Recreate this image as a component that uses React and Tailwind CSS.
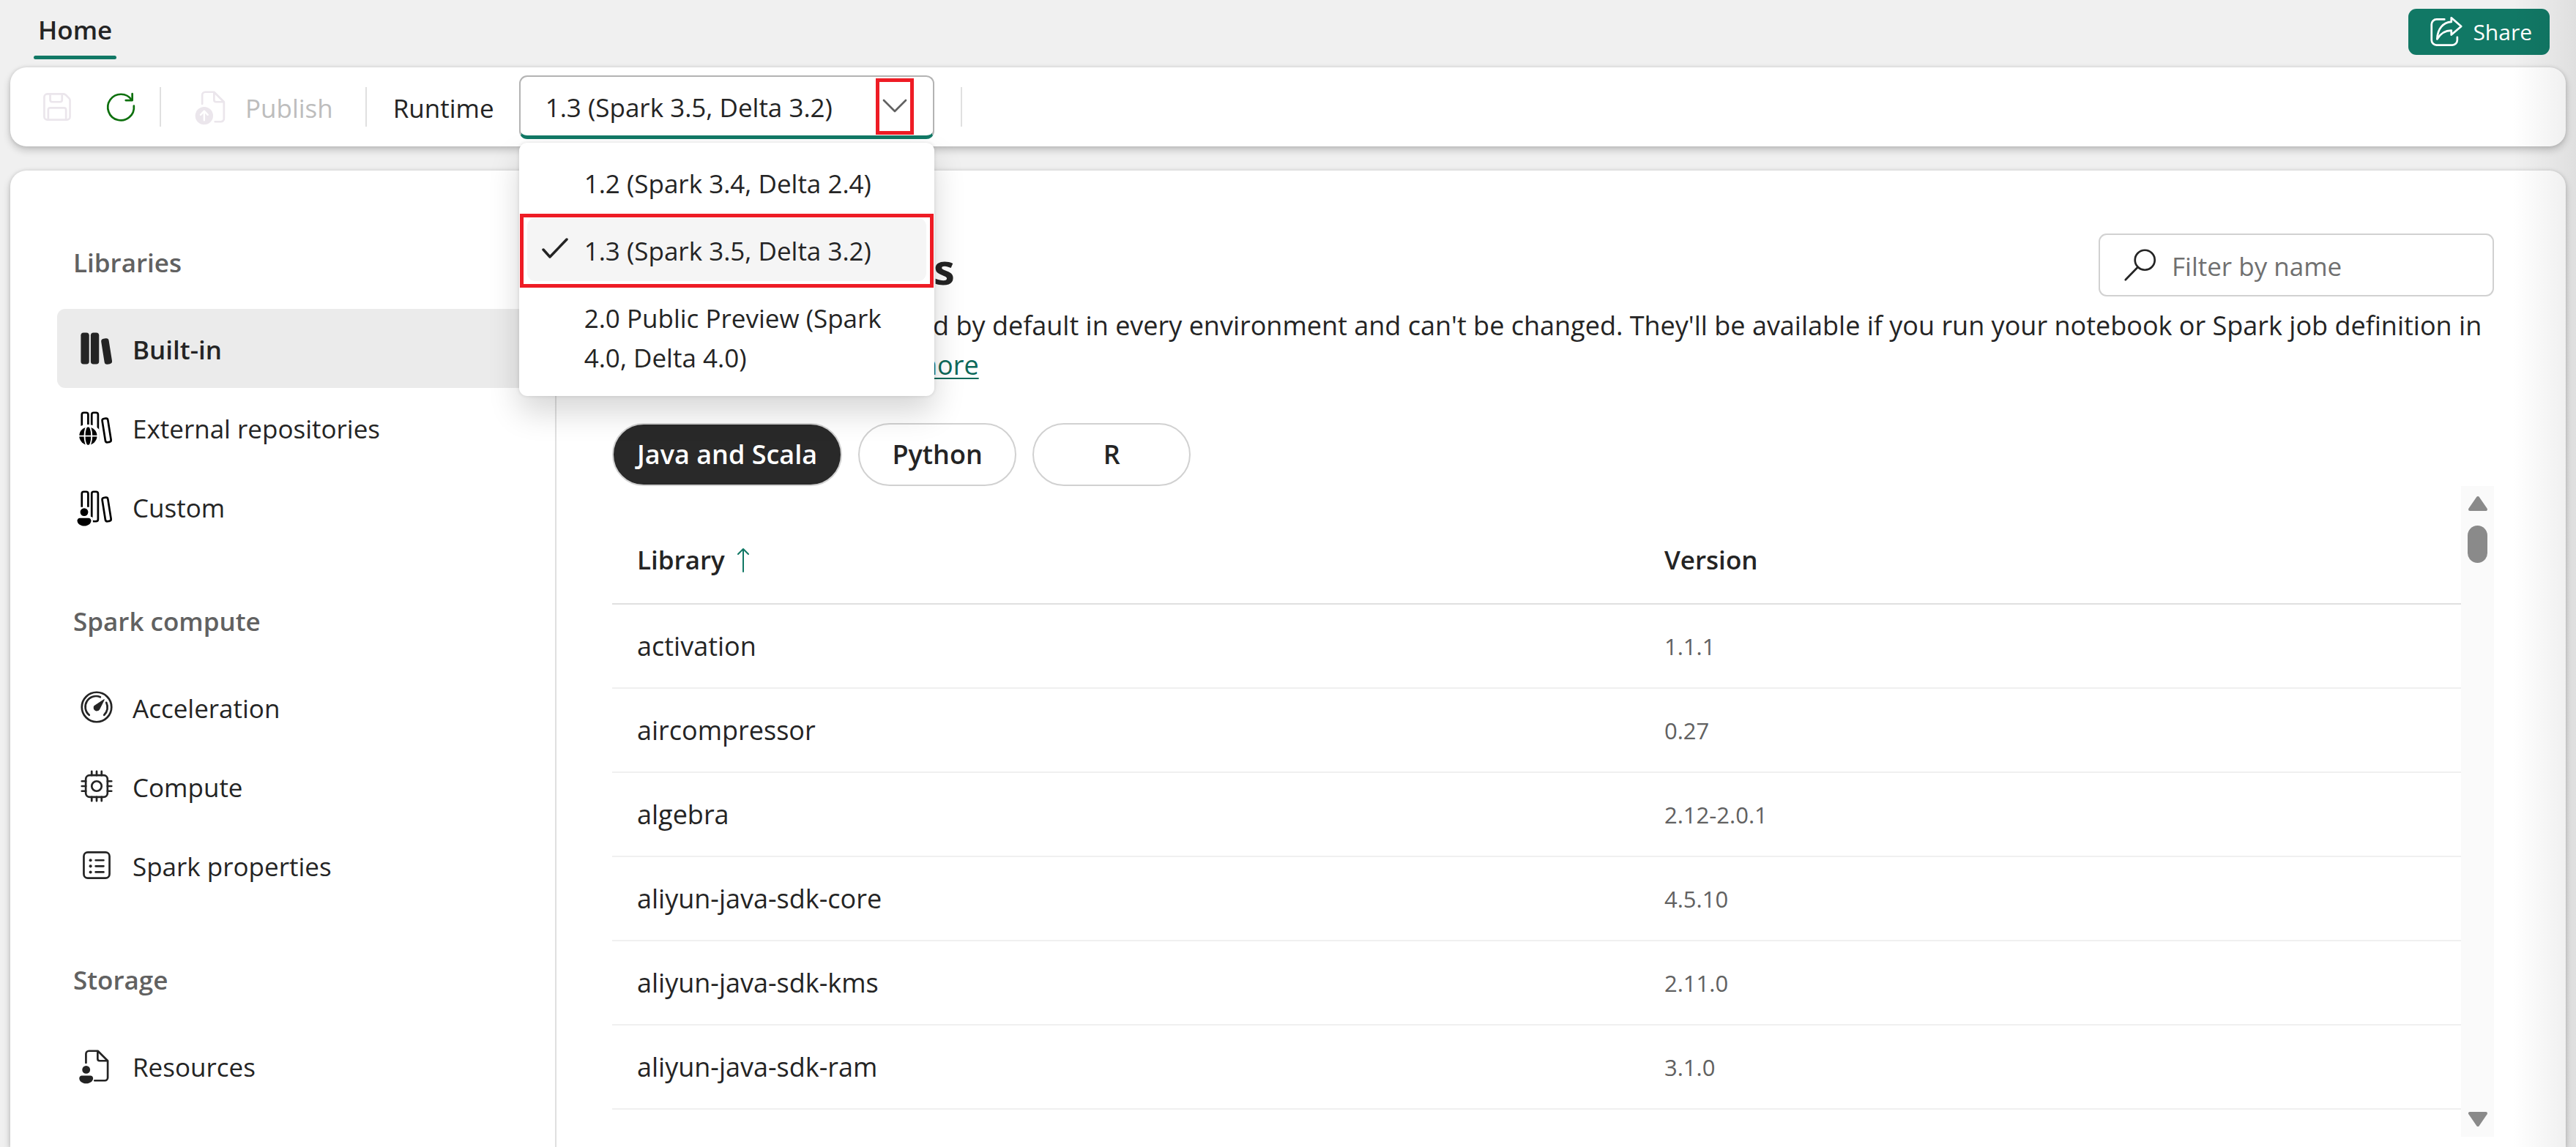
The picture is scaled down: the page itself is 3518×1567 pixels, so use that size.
import React, { useState } from 'react';

const runtimes = [
    "1.2 (Spark 3.4, Delta 2.4)",
    "1.3 (Spark 3.5, Delta 3.2)",
    "2.0 Public Preview (Spark 4.0, Delta 4.0)",
];

const languages = ["Java and Scala", "Python", "R"];

const libraries = [
    { name: "activation", version: "1.1.1" },
    { name: "aircompressor", version: "0.27" },
    { name: "algebra", version: "2.12-2.0.1" },
    { name: "aliyun-java-sdk-core", version: "4.5.10" },
    { name: "aliyun-java-sdk-kms", version: "2.11.0" },
    { name: "aliyun-java-sdk-ram", version: "3.1.0" },
];

// Shared wrapper, every icon is drawn on a 20x20 grid
function Icon({ children, className = "" }) {
    return (
        <svg
            viewBox="0 0 20 20"
            fill="none"
            stroke="currentColor"
            strokeLinecap="round"
            strokeLinejoin="round"
            aria-hidden="true"
            className={`size-[54px] shrink-0 ${className}`}
        >
            {children}
        </svg>
    );
}

const SaveIcon = () => (
    <Icon>
        <path d="M5 3.5h8.2c.4 0 .8.2 1.1.4l1.8 1.8c.3.3.4.7.4 1.1V15a1.5 1.5 0 0 1-1.5 1.5H5A1.5 1.5 0 0 1 3.5 15V5A1.5 1.5 0 0 1 5 3.5Z" />
        <path d="M6.5 3.5v3a1 1 0 0 0 1 1h4a1 1 0 0 0 1-1v-3M5.5 16.5v-5a1 1 0 0 1 1-1h7a1 1 0 0 1 1 1v5" />
    </Icon>
);

const RefreshIcon = () => (
    <Icon className="text-[#0e700e]">
        <path d="M16.6 9.5A6.6 6.6 0 1 1 15.5 6.5" />
        <path d="M15.8 3.4V6.7H12.5" />
    </Icon>
);

const PublishIcon = () => (
    <Icon>
        <path d="M4.5 8.5V4A1.5 1.5 0 0 1 6 2.5h4.5l5 5V16a1.5 1.5 0 0 1-1.5 1.5h-3M10.5 2.5v4a1 1 0 0 0 1 1h4" />
        <circle cx="5.5" cy="14.5" r="4.5" fill="currentColor" stroke="none" />
        <path d="M5.5 16.8v-4.600M3.7 14l1.8-1.9L7.3 14" stroke="#fff" strokeWidth=".9" />
    </Icon>
);

const ShareIcon = () => (
    <Icon>
        <path d="M9 3.5H5A2.5 2.5 0 0 0 2.5 6v8A2.5 2.5 0 0 0 5 16.5h8A2.5 2.5 0 0 0 15.5 14v-1.5" />
        <path d="M12.5 2.7 17.5 7l-5 4.3V9.1c-3.2 0-5.4 1.300-7.2 4.400.2-5.200 3-8.500 7.200-8.700Z" />
    </Icon>
);

const SearchIcon = () => (
    <Icon>
        <circle cx="12.3" cy="7.5" r="5" />
        <path d="m8.7 11.1-6.2 6.400" />
    </Icon>
);

const BuiltInIcon = () => (
    <Icon>
        <g fill="currentColor" stroke="none">
            <rect x="2" y="2" width="4.2" height="16" rx="1.4" />
            <rect x="7" y="2" width="4.2" height="16" rx="1.4" />
            <rect x="13.1" y="4.9" width="3.9" height="13.1" rx="1.4" transform="rotate(-9 15.1 11.5)" />
        </g>
    </Icon>
);

const Books = () => (
    <>
        <rect x="2.5" y="2.5" width="3.2" height="15" rx="1" />
        <rect x="7.5" y="2.5" width="3.2" height="15" rx="1" />
        <rect x="13.6" y="5.4" width="2.9" height="12.1" rx="1" transform="rotate(-9 15.1 11.5)" />
    </>
);

const ExternalIcon = () => (
    <Icon className="text-black">
        <Books />
        <path d="M0 20V10.500c1.500-1.500 3.500-2 5.700-2s4 .8 5.600 2.500V20Z" fill="#fff" stroke="none" />
        <circle cx="5.7" cy="14.3" r="4.5" fill="currentColor" stroke="none" />
        <g stroke="#fff" strokeWidth=".7">
            <path d="M1 14.3h9.400" />
            <ellipse cx="5.7" cy="14.3" rx="1.8" ry="5.200" />
        </g>
    </Icon>
);

const CustomIcon = () => (
    <Icon className="overflow-visible text-black">
        <Books />
        <path d="M0 20v-5l1-4.700h5.400l.4 4.700 1.300.6V20Z" fill="#fff" stroke="none" />
        <g fill="currentColor" stroke="none">
            <circle cx="3.7" cy="12.8" r="2" />
            <path d="M1.5 15.8h4.400c.7 0 1.300.6 1.300 1.300 0 1.600-1.600 2.700-3.500 2.700S.2 18.700.2 17.100c0-.7.6-1.300 1.300-1.300Z" />
        </g>
    </Icon>
);

const AccelerationIcon = () => (
    <Icon>
        <circle cx="10" cy="10" r="7.5" />
        <path d="M6.2 14A5.4 5.4 0 0 1 11.8 4.9M14.9 7.7A5.4 5.4 0 0 1 13.8 14" />
        <path d="M13.8 6.2 11.3 11.2A1.5 1.5 0 1 1 8.9 9.4Z" fill="currentColor" strokeWidth=".4" />
    </Icon>
);

const ComputeIcon = () => (
    <Icon>
        <rect x="4.5" y="4.5" width="11" height="11" rx="2" />
        <circle cx="10" cy="10" r="2.5" />
        <path d="M7.5 4.5v-2M10 4.5v-2M12.5 4.5v-2M7.5 17.5v-2M10 17.5v-2M12.5 17.5v-2M4.5 7.5h-2M4.5 10h-2M4.5 12.5h-2M17.5 7.5h-2M17.5 10h-2M17.5 12.5h-2" />
    </Icon>
);

const PropertiesIcon = () => (
    <Icon>
        <rect x="3.5" y="3.5" width="13" height="13" rx="2" />
        <path d="M9.5 7.5h4M9.5 10.5h4M9.5 13.5h4" />
        <g fill="currentColor" stroke="none">
            <circle cx="6.9" cy="7.5" r=".75" />
            <circle cx="6.9" cy="10.5" r=".75" />
            <circle cx="6.9" cy="13.5" r=".75" />
        </g>
    </Icon>
);

const ResourcesIcon = () => (
    <Icon>
        <path d="M4.6 8.5V4A1.5 1.5 0 0 1 6.1 2.5h4.5l5 5V16a1.5 1.5 0 0 1-1.5 1.5H9M10.5 2.5v4a1 1 0 0 0 1 1h4" />
        <g fill="currentColor" stroke="none">
            <circle cx="4.7" cy="12" r="2" />
            <path d="M2.5 15h4.400c.7 0 1.300.6 1.300 1.300 0 1.600-1.600 2.700-3.500 2.700s-3.500-1.100-3.500-2.700c0-.7.6-1.300 1.300-1.300Z" />
        </g>
    </Icon>
);

const sections = [
    {
        title: "Libraries",
        items: [
            { label: "Built-in", icon: BuiltInIcon, active: true },
            { label: "External repositories", icon: ExternalIcon },
            { label: "Custom", icon: CustomIcon },
        ],
    },
    {
        title: "Spark compute",
        items: [
            { label: "Acceleration", icon: AccelerationIcon },
            { label: "Compute", icon: ComputeIcon },
            { label: "Spark properties", icon: PropertiesIcon },
        ],
    },
    {
        title: "Storage",
        items: [{ label: "Resources", icon: ResourcesIcon }],
    },
];

function Divider() {
    return <div className="h-[54px] w-[2px] shrink-0 bg-[#e0e0e0]"></div>;
}

function RuntimePicker({ value, onChange }) {
    return (
        <div className="relative ml-[34px] w-[567px]">
            <select
                id="runtime"
                value={value}
                onChange={(e) => onChange(e.target.value)}
                className="block h-[87px] w-full appearance-none rounded-[11px] border-2 border-b-[5px] border-[#b3b3b3] border-b-[#117865] bg-white pt-[4px] pl-[34px] outline-none"
            >
                {runtimes.map((r) => <option key={r}>{r}</option>)}
            </select>
            <div className="pointer-events-none absolute top-[4px] right-[28px] flex h-[77px] w-[52px] items-center justify-center border-[5px] border-[#ee1c25] text-[#616161]">
                <svg viewBox="0 0 34 20" fill="none" stroke="currentColor" strokeWidth="2.7" strokeLinecap="round" strokeLinejoin="round" className="h-[20px] w-[34px]">
                    <path d="m2 2 15 15L32 2" />
                </svg>
            </div>

            {/* Options list, open under the field */}
            <ul role="listbox" aria-label="Runtime versions" className="absolute top-full left-0 z-20 mt-[5px] flex w-full flex-col gap-[6px] rounded-[11px] bg-white p-[11px] shadow-[0_0_5px_rgba(0,0,0,0.12),0_22px_43px_rgba(0,0,0,0.16)]">
                {runtimes.map((r) => (
                    <li key={r} role="option" aria-selected={r === value} className="relative">
                        <button
                            type="button"
                            onClick={() => onChange(r)}
                            className={`flex w-full items-start rounded-[11px] pt-[18px] pr-[20px] pb-[14px] pl-[16px] text-left ${r === value ? "bg-[#f5f5f5]" : ""}`}
                        >
                            <span className="flex h-[50px] w-[62px] shrink-0 items-center">
                                {r === value && (
                                    <svg viewBox="0 0 44 44" fill="none" stroke="currentColor" strokeWidth="3.5" strokeLinecap="round" strokeLinejoin="round" className="size-[44px]">
                                        <path d="m6 22 9 10L38 8" />
                                    </svg>
                                )}
                            </span>
                            {r}
                        </button>
                        {r === value && <span className="pointer-events-none absolute -inset-x-[10px] -top-[6px] -bottom-[9px] border-[5px] border-[#ee1c25]"></span>}
                    </li>
                ))}
            </ul>
        </div>
    );
}

function Sidebar() {
    return (
        <nav aria-label="Environment" className="flex w-[746px] shrink-0 flex-col gap-[76px] border-r-2 border-[#e0e0e0] pt-[99px] pl-[64px]">
            {sections.map((section) => (
                <section key={section.title}>
                    <h2 className="mb-[36px] pl-[22px] font-semibold text-[#616161]">{section.title}</h2>
                    <ul>
                        {section.items.map((item) => (
                            <li key={item.label}>
                                <a
                                    href="#"
                                    className={`flex h-[108px] items-center gap-[22px] rounded-l-[11px] pl-[27px] ${item.active ? "bg-[#ebebeb] font-semibold" : ""}`}
                                >
                                    <item.icon />
                                    <span className="pt-[3px]">{item.label}</span>
                                </a>
                            </li>
                        ))}
                    </ul>
                </section>
            ))}
        </nav>
    );
}

function LibraryTable() {
    return (
        <div className="flex min-h-0 flex-1">
            <div className="min-w-0 flex-1 overflow-hidden pt-[41px]">
                <table className="w-full table-fixed border-collapse text-left">
                    <thead>
                        <tr className="h-[120px] border-b-2 border-[#e0e0e0]">
                            <th className="w-[1403px] px-[34px] font-semibold">
                                <span className="flex items-center gap-[16px]">
                                    Library
                                    <svg viewBox="0 0 18 34" fill="none" stroke="#117865" strokeWidth="2" strokeLinecap="round" strokeLinejoin="round" className="h-[34px] w-[18px]">
                                        <path d="M9 33V2M2 9l7-7 7 7" />
                                    </svg>
                                </span>
                            </th>
                            <th className="px-[34px] font-semibold">Version</th>
                        </tr>
                    </thead>
                    <tbody>
                        {libraries.map((lib) => (
                            <tr key={lib.name} className="h-[115px] border-b-2 border-[#f0f0f0]">
                                <td className="px-[34px] text-[36px]">{lib.name}</td>
                                <td className="px-[34px] text-[31px] text-[#616161]">{lib.version}</td>
                            </tr>
                        ))}
                    </tbody>
                </table>
            </div>

            {/* Scrollbar */}
            <div className="flex w-[45px] shrink-0 flex-col items-center bg-[#fafafa] py-[13px] text-[#8a8a8a]">
                <button type="button" aria-label="Scroll up">
                    <svg viewBox="0 0 28 22" fill="currentColor" stroke="currentColor" strokeWidth="4" strokeLinejoin="round" className="h-[22px] w-[28px]">
                        <path d="M14 3 25 19H3Z" />
                    </svg>
                </button>
                <div className="mt-[19px] h-[51px] w-[27px] rounded-full bg-[#8a8a8a]"></div>
                <button type="button" aria-label="Scroll down" className="mt-auto">
                    <svg viewBox="0 0 28 22" fill="currentColor" stroke="currentColor" strokeWidth="4" strokeLinejoin="round" className="h-[22px] w-[28px]">
                        <path d="M14 19 3 3h22Z" />
                    </svg>
                </button>
            </div>
        </div>
    );
}

export default function App() {
    const [runtime, setRuntime] = useState(runtimes[1]);
    const [language, setLanguage] = useState(languages[0]);
    const [filter, setFilter] = useState("");

    return (
        <div className="relative flex h-screen flex-col overflow-hidden bg-[#f0f0f0] font-['Open_Sans','Noto_Sans',sans-serif] text-[35px] leading-[54px] text-[#242424]">
            <header className="flex h-[92px] shrink-0 items-start justify-between pr-[36px] pl-[46px]">
                <a href="#" className="flex flex-col pt-[14px] font-semibold">
                    <span className="px-[6px]">Home</span>
                    <span className="mt-[8px] h-[5px] rounded-full bg-[#117865]"></span>
                </a>
                <button type="button" className="mt-[12px] flex h-[63px] items-center gap-[9px] rounded-[11px] bg-[#117865] pr-[24px] pl-[25px] text-[30px] text-white">
                    <ShareIcon />
                    Share
                </button>
            </header>

            <div className="z-10 mx-[14px] flex h-[108px] shrink-0 items-center rounded-[22px] bg-white pl-[37px] shadow-[0_0_5px_rgba(0,0,0,0.12),0_5px_11px_rgba(0,0,0,0.2)]">
                <button type="button" aria-label="Save" disabled className="text-[#ebe6ec]"><SaveIcon /></button>
                <button type="button" aria-label="Refresh" className="mr-[26px] ml-[33px]"><RefreshIcon /></button>
                <Divider />
                <button type="button" disabled className="mr-[44px] ml-[44px] flex items-center gap-[17px] text-[#bdbdbd]">
                    <span className="text-[#ebe6ec]"><PublishIcon /></span>
                    <span className="pt-[3px]">Publish</span>
                </button>
                <Divider />
                <label htmlFor="runtime" className="ml-[36px] pt-[3px]">Runtime</label>
                <RuntimePicker value={runtime} onChange={setRuntime} />
                <div className="ml-[36px]"><Divider /></div>
            </div>

            <main className="mx-[14px] mt-[33px] flex min-h-0 flex-1 rounded-t-[22px] bg-white shadow-[0_0_5px_rgba(0,0,0,0.12),0_5px_11px_rgba(0,0,0,0.2)]">
                <Sidebar />

                <div className="flex min-w-0 flex-1 flex-col pt-[86px] pr-[98px] pb-[14px] pl-[76px]">
                    <div className="flex items-end justify-between">
                        <h1 className="text-[58px] leading-[76px] font-bold">Built-in libraries</h1>
                        <label className="flex h-[86px] w-[540px] items-center gap-[16px] rounded-[11px] border-2 border-[#d1d1d1] pr-[20px] pl-[28px]">
                            <SearchIcon />
                            <input
                                type="text"
                                aria-label="Filter by name"
                                placeholder="Filter by name"
                                value={filter}
                                onChange={(e) => setFilter(e.target.value)}
                                className="w-full min-w-0 pt-[3px] outline-none placeholder:text-[#707070]"
                            />
                        </label>
                    </div>
                    <p className="mt-[13px] text-[36px]">
                        These libraries are installed by default in every environment and can't be changed. They'll be available if you run your notebook or Spark job definition in this environment.{" "}
                        <a href="#" className="text-[#0c695a] underline decoration-2 underline-offset-4">Learn more</a>
                    </p>

                    <div className="mt-[52px] flex gap-[22px]">
                        {languages.map((lang) => (
                            <button
                                key={lang}
                                type="button"
                                aria-pressed={lang === language}
                                onClick={() => setLanguage(lang)}
                                className={`h-[86px] min-w-[216px] rounded-full border-2 border-[#d1d1d1] px-[32px] text-[36px] font-semibold ${lang === language ? "bg-[#292929] text-white" : "bg-white"}`}
                            >
                                {lang}
                            </button>
                        ))}
                    </div>

                    <LibraryTable />
                </div>
            </main>

            <div className="pointer-events-none absolute inset-y-0 right-0 z-30 w-[86px] bg-linear-to-r from-transparent to-black/7"></div>
        </div>
    );
}
